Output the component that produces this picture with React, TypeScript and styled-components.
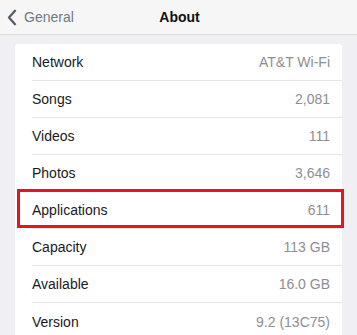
import React from 'react';
import styled, { createGlobalStyle } from 'styled-components';

interface RowProps {
  highlighted?: boolean;
}

const items = [
  { label: 'Network', value: 'AT&T Wi-Fi' },
  { label: 'Songs', value: '2,081' },
  { label: 'Videos', value: '111' },
  { label: 'Photos', value: '3,646' },
  { label: 'Applications', value: '611', highlighted: true },
  { label: 'Capacity', value: '113 GB' },
  { label: 'Available', value: '16.0 GB' },
  { label: 'Version', value: '9.2 (13C75)' },
];

const App: React.FC = () => {
  return (
    <>
      <GlobalStyle />
      <Screen>
        <NavBar>
          <BackButton>
            <svg width="10" height="17" viewBox="0 0 10 17">
              <path d="M8 1.8 L2 8.5 L8 15.2" fill="none" stroke="#56626c" strokeWidth="2.4" strokeLinecap="round" strokeLinejoin="round" />
            </svg>
            <span>General</span>
          </BackButton>
          <Title>About</Title>
        </NavBar>
        <Content>
          <Card>
            {items.map((item) => (
              <Row key={item.label} highlighted={item.highlighted}>
                <Label>{item.label}</Label>
                <Value>{item.value}</Value>
              </Row>
            ))}
          </Card>
        </Content>
      </Screen>
    </>
  );
};

export default App;

const GlobalStyle = createGlobalStyle`
  html, body {
    margin: 0;
    padding: 0;
    background: #efeff4;
    font-family: "Liberation Sans", Arial, sans-serif;
    overflow: hidden;
  }
`;

const Screen = styled.div`
  width: 357px;
  height: 335px;
  background: #efeff4;
  overflow: hidden;
`;

const NavBar = styled.div`
  position: relative;
  height: 34px;
  background: #f6f6f7;
  border-bottom: 1px solid #dcdcdf;
  display: flex;
  align-items: center;
  justify-content: center;
`;

const BackButton = styled.div`
  position: absolute;
  left: 7px;
  top: 0;
  bottom: 0;
  display: flex;
  align-items: center;
  gap: 7px;
  color: #6e7a84;
  font-size: 14px;

  svg {
    display: block;
  }
`;

const Title = styled.div`
  font-size: 14px;
  font-weight: bold;
  color: #111;
  margin-left: 2px;
`;

const Content = styled.div`
  padding: 9px 15px 0 15px;
`;

const Card = styled.div`
  width: 327px;
  background: #fff;
  border-radius: 3px;
  padding-left: 17px;
  box-sizing: border-box;
`;

const Row = styled.div<RowProps>`
  position: relative;
  height: 37px;
  display: flex;
  align-items: center;
  justify-content: space-between;
  padding-right: 12px;
  border-bottom: 1px solid #e6e6e9;
  box-sizing: border-box;

  &:last-child {
    border-bottom: none;
  }

  &::after {
    content: '';
    display: ${({ highlighted }) => (highlighted ? 'block' : 'none')};
    position: absolute;
    left: -15px;
    right: -2px;
    top: -3px;
    bottom: 0;
    border: 3px solid #e8141c;
  }
`;

const Label = styled.span`
  font-size: 14px;
  color: #1a1a1a;
`;

const Value = styled.span`
  font-size: 14px;
  color: #8e8e93;
`;
